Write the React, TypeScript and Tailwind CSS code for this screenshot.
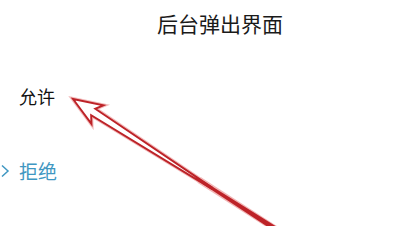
const font = { fontFamily: '"Noto Sans CJK SC", "Noto Sans", sans-serif' };

function Arrow() {
  // outlined red arrow pointing up-left at the "允许" option; shaft merges into a solid stroke
  const shape = "0,0 29,-11 24,-3.8 165,-0.6 165,0.6 24,3.8 29,11";
  return (
    <svg
      className="absolute left-0 top-0 pointer-events-none"
      width="418"
      height="226"
      viewBox="0 0 418 226"
    >
      <g transform="translate(73 99) rotate(32.7)">
        <line x1="150" y1="0" x2="275" y2="0" stroke="#f2b5b5" strokeWidth="6.5" />
        <polygon points={shape} fill="none" stroke="#f3bcbc" strokeWidth="4" strokeLinejoin="miter" />
        <polygon points={shape} fill="#ffffff" stroke="#bd2328" strokeWidth="1.9" strokeLinejoin="miter" />
        <path d="M155 -0.4 L275 -2 L275 2 L155 0.4 Z" fill="#bd2328" stroke="#bd2328" strokeWidth="2" strokeLinejoin="round" />
      </g>
    </svg>
  );
}

export default function App() {
  return (
    <div className="relative w-[418px] h-[226px] overflow-hidden bg-white" style={font}>
      <div className="pl-[157px] pt-[13px] text-[21px] leading-none text-[#1a1a1a]">
        后台弹出界面
      </div>
      <div className="pl-[19px] pt-[53px] text-[18px] leading-none text-[#111111]">允许</div>
      <div className="flex items-center pt-[56px] text-[19px] leading-none text-[#3f97c2]">
        <svg width="19" height="14" viewBox="0 0 19 14" className="shrink-0">
          <path d="M2 1.5 L8 7 L2 12.5" fill="none" stroke="#3f97c2" strokeWidth="1.5" />
        </svg>
        <span>拒绝</span>
      </div>
      <Arrow />
    </div>
  );
}
